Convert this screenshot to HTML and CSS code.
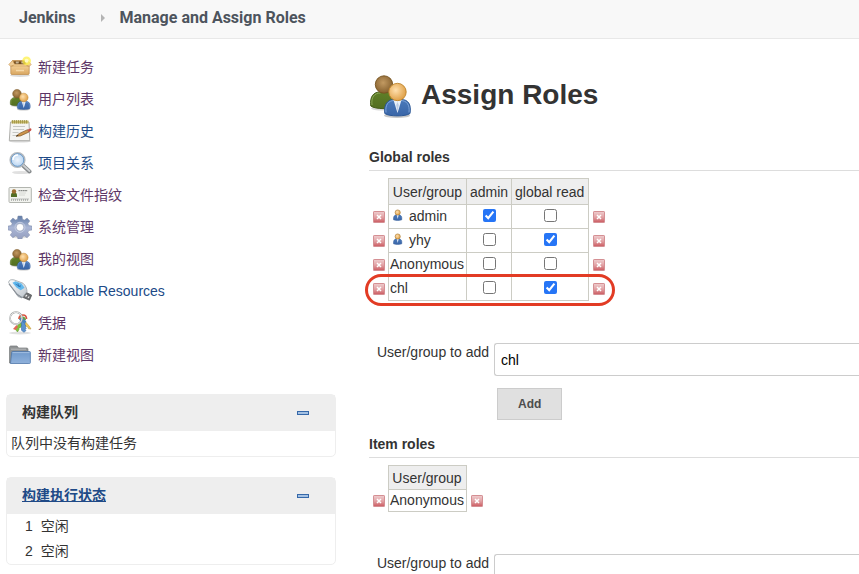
FILE: index.html
```html
<!DOCTYPE html>
<html lang="zh-CN">
<head>
<meta charset="utf-8">
<title>Assign Roles [Jenkins]</title>
<link rel="stylesheet" href="styles.css">
</head>
<body>
<svg class="defs" aria-hidden="true">
  <defs>
    <linearGradient id="g-box" x2="0" y2="1"><stop stop-color="#f3cd92"/><stop offset="1" stop-color="#d8a661"/></linearGradient>
    <radialGradient id="g-brown" cx=".45" cy=".4" r=".6"><stop stop-color="#c29a62"/><stop offset="1" stop-color="#85602e"/></radialGradient>
    <radialGradient id="g-tan" cx=".4" cy=".4" r=".65"><stop stop-color="#ffe0ae"/><stop offset="1" stop-color="#dd9c41"/></radialGradient>
    <linearGradient id="g-green" x2="0" y2="1"><stop stop-color="#5f7f28"/><stop offset="1" stop-color="#536e20"/></linearGradient>
    <linearGradient id="g-blue" x2="0" y2="1"><stop stop-color="#4a79ba"/><stop offset="1" stop-color="#3a66a8"/></linearGradient>
    <radialGradient id="g-lens"><stop stop-color="#eef5fd"/><stop offset="1" stop-color="#b4d2f0"/></radialGradient>
    <linearGradient id="g-gear" x2="0" y2="1"><stop stop-color="#5f7ba6"/><stop offset=".5" stop-color="#a9b5d4"/><stop offset="1" stop-color="#959fc0"/></linearGradient>
    <linearGradient id="g-folder" x2="0" y2="1"><stop stop-color="#7099cb"/><stop offset="1" stop-color="#8fb1db"/></linearGradient>
    <linearGradient id="g-remove" x2="0" y2="1"><stop stop-color="#efcdcf"/><stop offset=".5" stop-color="#e2a3a6"/><stop offset="1" stop-color="#cb5a60"/></linearGradient>
    <linearGradient id="g-metal" x2="1" y2="1"><stop stop-color="#fff"/><stop offset="1" stop-color="#bcc3ca"/></linearGradient>
  </defs>
  <symbol id="i-box" viewBox="0 0 24 24">
    <ellipse cx="12" cy="20.500" rx="10" ry="1.500" fill="#000" opacity=".14"/>
    <path d="M4.500 5.500h15l2 5h-19z" fill="#b07f40" stroke="#c08b45" stroke-width=".7"/>
    <path d="M6 6.500h12l1 2.500H5z" fill="#6f4b1e"/><path d="M8 6.500h3l-.5 2h-3zM13 6.500h2l.5 2h-2z" fill="#c9b594"/>
    <path d="M4.500 5.500L.8 9.500l2 2L7 9.700zM19.500 5.500l3.700 4-2 2L17 9.700z" fill="#f0cd96" stroke="#c8944f" stroke-width=".6"/>
    <path d="M2.800 11.200h18.400v7.200c0 .7-.4 1.100-1.100 1.100H3.900c-.7 0-1.100-.4-1.100-1.100z" fill="url(#g-box)" stroke="#bd8a48" stroke-width=".7"/>
    <path d="M6 9.200h12l1 2.600H5z" fill="#e9c184"/><path d="M8 15.500h8" stroke="#f6d9a8" stroke-width="1.500"/>
    <circle cx="18.600" cy="5.800" r="4.400" fill="#fdf04a" opacity=".75"/><circle cx="18.600" cy="5.800" r="2" fill="#fffbc4"/>
  </symbol>
  <symbol id="i-users" viewBox="0 0 48 48">
    <ellipse cx="17" cy="37.500" rx="12" ry="2" fill="#000" opacity=".15"/>
    <ellipse cx="31" cy="44.500" rx="13" ry="2.500" fill="#000" opacity=".22"/>
    <path d="M4.800 35C3.500 25 8 21 14 21h8c7 0 10 5 9 14-4 3.500-22 3.500-26.200 0z" fill="url(#g-green)" stroke="#445c18"/>
    <path d="M6 34c-1-8 2.500-12 8.500-12" fill="none" stroke="#8fab5a" stroke-width=".9"/>
    <circle cx="18" cy="13.500" r="8.700" fill="url(#g-brown)" stroke="#76531f" stroke-width=".9"/>
    <path d="M18.800 42.500C17.500 33 22 28.500 28 28.500h7c7 0 10.500 4.500 9 14-4 3.200-21 3.200-25.200 0z" fill="url(#g-blue)" stroke="#2b5796"/>
    <path d="M20 41.500c-1-8 2.500-11.800 8-12M43 41.500c1-8-2.500-11.800-8-12" fill="none" stroke="#84a9db" stroke-width=".9"/>
    <path d="M27.500 29h8l-4 13z" fill="#eaf1fa"/><path d="M31.500 31l-1.300 3 1.300 7 1.300-7z" fill="#bccde4"/>
    <circle cx="31.500" cy="21" r="8.700" fill="url(#g-tan)" stroke="#be842c" stroke-width=".9"/>
  </symbol>
  <symbol id="i-user" viewBox="0 0 12 12">
    <path d="M1.500 10.800c-.4-3.600 1.200-5 3.300-5h1.700c2.300 0 3.700 1.400 3.300 5-1.900.9-6.500.9-8.300 0z" fill="url(#g-blue)" stroke="#3a639f" stroke-width=".5"/>
    <path d="M4.700 6h2l-1 4z" fill="#dfe9f6"/><circle cx="5.700" cy="3.500" r="2.600" fill="url(#g-tan)" stroke="#a97a34" stroke-width=".6"/>
  </symbol>
  <symbol id="i-note" viewBox="0 0 24 24">
    <ellipse cx="12" cy="22.300" rx="11" ry="1.200" fill="#000" opacity=".14"/>
    <path d="M2.500 3h18.500l.8 18.700H1.300z" fill="#f4f4f2" stroke="#9a9b97" stroke-width=".8"/>
    <path d="M3.500 1.500h17v3h-17z" fill="#c5b869"/><path d="M4.500 1v3.500M6.500 1v3.500M8.500 1v3.500M10.500 1v3.500M12.500 1v3.500M14.500 1v3.500M16.500 1v3.500M18.500 1v3.500" stroke="#988b3d" stroke-width=".7"/>
    <path d="M5 7.500h12M5 10.500h11M4.500 13.500h6M4.500 16.500h5" stroke="#c6c8c5"/>
    <path d="M8 17.300l3.500-2.900 8-3.700 1.500 2.300-8.500 3.900z" fill="#cd944b" stroke="#7c5628" stroke-width=".7"/><path d="M19.500 10.700l2.500-1.300c1.400-.3 2 1.500.9 2.300L21 13z" fill="#c85248"/>
    <path d="M8 17.300l1.700-1.400.9.900z" fill="#222"/>
  </symbol>
  <symbol id="i-search" viewBox="0 0 24 24">
    <ellipse cx="13" cy="21.500" rx="9" ry="1.600" fill="#000" opacity=".12"/>
    <path d="M15 14.500l6.500 6" stroke="#85898b" stroke-width="4" stroke-linecap="round"/><path d="M15.500 14.500l6 5.500" stroke="#cccfd1" stroke-width="1.800" stroke-linecap="round"/>
    <circle cx="9.500" cy="9" r="7.200" fill="url(#g-lens)" stroke="#b4b9be" stroke-width="1.800"/><circle cx="9.500" cy="9" r="6.300" fill="none" stroke="#6397cb" stroke-width=".9"/>
    <path d="M5 9c0-3 2-5 5-5" fill="none" stroke="#fff" stroke-width="1.500"/>
  </symbol>
  <symbol id="i-card" viewBox="0 0 24 24">
    <rect x="1" y="4.500" width="22.300" height="15" rx="1" fill="#f2f3ef" stroke="#b2b5af"/>
    <path d="M3 14c-.3-4 1-4.500 3-4.500S9.200 10 9 14z" fill="#526d24"/><circle cx="6" cy="8.500" r="2.200" fill="#9b6d30"/>
    <path d="M10.500 7.700h9" stroke="#6b6e6b" stroke-dasharray="1.800 .4"/><path d="M11 10h7M11 12h6" stroke="#d0d2ce" stroke-width=".8"/>
    <path d="M3 17h18" stroke="#a2a5a1" stroke-width="1.600" stroke-dasharray="1 1"/><path d="M3 16h18" stroke="#9b9e9a" stroke-width=".6"/>
  </symbol>
  <symbol id="i-gear" viewBox="0 0 24 24">
    <ellipse cx="12" cy="22" rx="8" ry="1.500" fill="#000" opacity=".12"/>
    <path fill-rule="evenodd" d="M10 1h4l.6 3.300 1.800.8 2.700-2 2.700 2.800-1.900 2.700.8 1.900 3.300.6v3.900l-3.300.6-.8 1.800 1.900 2.700-2.700 2.700-2.700-1.900-1.800.8-.6 2.300h-4l-.6-2.300-1.800-.8-2.700 1.900-2.700-2.700L4.100 17.400l-.8-1.800L0 15v-3.900l3.300-.6.8-1.900-1.900-2.700 2.700-2.800 2.700 2 1.800-.8zM12 8.500a3.800 3.800 0 100 7.600 3.800 3.800 0 000-7.600z" fill="url(#g-gear)" stroke="#8491ad" stroke-width=".5"/>
    <circle cx="12" cy="12.300" r="5" fill="none" stroke="#c4cde2"/>
  </symbol>
  <symbol id="i-usb" viewBox="0 0 24 24">
    <path d="M14 18l4.500-4.500 5.200 2.700-2.200 5z" fill="#6d6f71" stroke="#4f5253" stroke-width=".7"/><path d="M17.500 17.500l1.500-1.500M20 19l1.200-1.500" stroke="#eee" stroke-width="1.200"/>
    <path d="M.6 3.500C.8 1 3 .3 6 .9l9 3.300c2.500 2 4 5.300 4 8.300l-5 6.500-4-1.500z" fill="url(#g-metal)" stroke="#9da4aa" stroke-width=".8"/>
    <path d="M4.500 3.800l3-1.500 6 2.200 3 4.200-3.800 2.500-4.500-3z" fill="#62b9ee"/><path d="M7.500 5l5 3M10 4.300l.5 3 2.500-.5" fill="none" stroke="#2b70ac" stroke-width=".8"/>
    <path d="M1 5l8.300 10.500L14 18.600" fill="none" stroke="#8a9198" stroke-width="1.200"/>
  </symbol>
  <symbol id="i-keys" viewBox="0 0 24 24">
    <ellipse cx="12" cy="22" rx="11" ry="1.500" fill="#000" opacity=".12"/>
    <path d="M16 9l5.500 6.500 1.500 2.500-2.500-.2-.8-2-1.500-.2-3-5z" fill="#efc95d" stroke="#c09b40" stroke-width=".6"/>
    <path d="M11.500 11L7.500 18.500l2 2.500 1.500-2.500-.2-1.300 1.800-.8 2.400-4z" fill="#80c03a" stroke="#5b9130" stroke-width=".5"/>
    <path d="M8.500 14l-3.500 4 2.500 1 2.500-3z" fill="#e36857"/>
    <path d="M12.500 9.500h4.500v4.500l1 1-1 1 1.200 1.200-1 1.300.8 1-2 1.800-2.500-2v-6z" fill="#5a92cf" stroke="#386ba5" stroke-width=".6"/>
    <path d="M11 8c0-3 2-4 4-4s3.500 1.500 3.500 4" fill="none" stroke="#d95440" stroke-width="1.700"/><path d="M11.500 9c0-3 1.800-3.600 3.300-3.600S18 6.600 18 9" fill="#64a04a"/>
    <path d="M12 7.500l5.500 4" stroke="#4881be" stroke-width="3"/>
    <circle cx="8" cy="7.200" r="6" fill="none" stroke="#9da0a0" stroke-width="1.700"/><circle cx="8" cy="7.200" r="6" fill="none" stroke="#f7f7f7" stroke-width=".8"/>
  </symbol>
  <symbol id="i-folder" viewBox="0 0 24 24">
    <path d="M1.500 20V4.500c0-1 .5-1.500 1.500-1.500h6l1.500 2h8c1 0 1.500.5 1.500 1.500V20z" fill="#909394" stroke="#777a7b" stroke-width=".7"/><path d="M3 6.200h15" stroke="#b7babb"/>
    <path d="M4.500 8.500h17c.6 0 .9.300.9.900v10.200c0 .6-.3.900-.9.900h-19L3.700 9.300c0-.5.300-.8.800-.8z" fill="url(#g-folder)" stroke="#4873a9" stroke-width=".7"/><path d="M4.500 9.600h17" stroke="#b4cdea" stroke-width=".7"/>
  </symbol>
  <symbol id="i-remove" viewBox="0 0 12 12">
    <rect x=".5" y=".5" width="11" height="11" rx=".6" fill="url(#g-remove)" stroke="#d48f93"/><path d="M4 4l4 4M8 4L4 8" stroke="#fff" stroke-width="1.500"/>
  </symbol>
  <symbol id="i-minus" viewBox="0 0 12 4"><rect x=".5" y=".5" width="11" height="3" fill="#a4c1e3" stroke="#3568a9"/></symbol>
</svg>

<header class="breadcrumbs">
  <a href="#">Jenkins</a>
  <span class="arrow"></span>
  <a href="#">Manage and Assign Roles</a>
</header>

<div class="page">
  <aside class="side">
    <nav class="tasks">
      <a class="visited" href="#"><svg><use href="#i-box"/></svg>新建任务</a>
      <a class="visited" href="#"><svg><use href="#i-users"/></svg>用户列表</a>
      <a href="#"><svg><use href="#i-note"/></svg>构建历史</a>
      <a href="#"><svg><use href="#i-search"/></svg>项目关系</a>
      <a class="visited" href="#"><svg><use href="#i-card"/></svg>检查文件指纹</a>
      <a class="visited" href="#"><svg><use href="#i-gear"/></svg>系统管理</a>
      <a class="visited" href="#"><svg><use href="#i-users"/></svg>我的视图</a>
      <a href="#"><svg><use href="#i-usb"/></svg>Lockable Resources</a>
      <a class="visited" href="#"><svg><use href="#i-keys"/></svg>凭据</a>
      <a class="visited" href="#"><svg><use href="#i-folder"/></svg>新建视图</a>
    </nav>
    <section class="pane">
      <div class="pane-head"><h2>构建队列</h2><button class="collapse" type="button" aria-label="collapse"><svg><use href="#i-minus"/></svg></button></div>
      <p class="queue">队列中没有构建任务</p>
    </section>
    <section class="pane">
      <div class="pane-head"><h2><a href="#">构建执行状态</a></h2><button class="collapse" type="button" aria-label="collapse"><svg><use href="#i-minus"/></svg></button></div>
      <ol class="executors"><li><span>1</span>空闲</li><li><span>2</span>空闲</li></ol>
    </section>
  </aside>

  <main class="main">
    <h1><svg><use href="#i-users"/></svg>Assign Roles</h1>

    <h2 class="section">Global roles</h2>
    <table class="roles">
      <thead><tr><td class="tool"></td><th>User/group</th><th>admin</th><th>global read</th><td class="tool"></td></tr></thead>
      <tbody>
        <tr><td class="tool"><button type="button" aria-label="remove"><svg><use href="#i-remove"/></svg></button></td><td class="name"><svg><use href="#i-user"/></svg>admin</td><td><input type="checkbox" aria-label="admin" checked></td><td><input type="checkbox" aria-label="global read"></td><td class="tool"><button type="button" aria-label="remove"><svg><use href="#i-remove"/></svg></button></td></tr>
        <tr><td class="tool"><button type="button" aria-label="remove"><svg><use href="#i-remove"/></svg></button></td><td class="name"><svg><use href="#i-user"/></svg>yhy</td><td><input type="checkbox" aria-label="admin"></td><td><input type="checkbox" aria-label="global read" checked></td><td class="tool"><button type="button" aria-label="remove"><svg><use href="#i-remove"/></svg></button></td></tr>
        <tr><td class="tool"><button type="button" aria-label="remove"><svg><use href="#i-remove"/></svg></button></td><td class="name">Anonymous</td><td><input type="checkbox" aria-label="admin"></td><td><input type="checkbox" aria-label="global read"></td><td class="tool"><button type="button" aria-label="remove"><svg><use href="#i-remove"/></svg></button></td></tr>
        <tr class="marked"><td class="tool"><button type="button" aria-label="remove"><svg><use href="#i-remove"/></svg></button></td><td class="name">chl</td><td><input type="checkbox" aria-label="admin"></td><td><input type="checkbox" aria-label="global read" checked></td><td class="tool"><button type="button" aria-label="remove"><svg><use href="#i-remove"/></svg></button></td></tr>
      </tbody>
    </table>
    <form class="add">
      <label for="global-add">User/group to add</label>
      <input id="global-add" type="text" value="chl">
      <button type="button">Add</button>
    </form>

    <h2 class="section">Item roles</h2>
    <table class="roles compact">
      <thead><tr><td class="tool"></td><th>User/group</th><td class="tool"></td></tr></thead>
      <tbody><tr><td class="tool"><button type="button" aria-label="remove"><svg><use href="#i-remove"/></svg></button></td><td class="name">Anonymous</td><td class="tool"><button type="button" aria-label="remove"><svg><use href="#i-remove"/></svg></button></td></tr></tbody>
    </table>
    <form class="add">
      <label for="item-add">User/group to add</label>
      <input id="item-add" type="text">
    </form>
  </main>
</div>
</body>
</html>
```
FILE: styles.css
```css
* { box-sizing: border-box; }

body {
  height: 100vh;
  margin: 0;
  overflow: hidden;
  background: #fff;
  color: #333;
  font: 14px/20px "Liberation Sans", "Noto Sans CJK SC", sans-serif;
}

h1, h2, p, ol { margin: 0; padding: 0; }
a { color: #204a87; text-decoration: none; }
svg { display: block; flex: none; }
.defs { position: absolute; width: 0; height: 0; }

.breadcrumbs {
  display: flex;
  align-items: center;
  padding: 8px 19px 10px;
  border-bottom: 1px solid #e8e8e8;
  background: #f8f8f8;
  font: bold 16px/20px Roboto, sans-serif;
}
.breadcrumbs a { color: #4d545d; }
.arrow {
  margin: 0 15px 0 25px;
  border: 4px solid transparent;
  border-right: 0;
  border-left-color: #b4b4b4;
}

.page { display: flex; }
.side { flex: none; width: 336px; padding: 12px 0 0 6px; }
.tasks { margin-bottom: 23px; }
.tasks a {
  display: flex;
  align-items: center;
  gap: 6px;
  height: 32px;
  padding-left: 2px;
}
.tasks .visited { color: #5c3566; }
.tasks svg { width: 24px; height: 24px; }

.pane {
  margin-bottom: 20px;
  border: 1px solid #eee;
  border-radius: 5px;
}
.pane-head {
  display: flex;
  align-items: center;
  justify-content: space-between;
  height: 36px;
  padding: 0 26px 0 15px;
  background: #eee;
}
.pane-head h2 { padding-bottom: 2px; font-size: 14px; font-weight: bold; }
.pane-head a { text-decoration: underline; }
.collapse, .tool button { padding: 0; border: 0; background: none; }
.collapse svg { width: 12px; height: 4px; }
.queue { padding: 2px 4px 3px; }
.executors { list-style: none; }
.executors li { display: flex; gap: 8px; height: 25px; padding: 2px 18px; }

.main { flex: 1; min-width: 0; padding: 32px 0 0 33px; }
h1 {
  display: flex;
  align-items: center;
  gap: 7px;
  margin: 0 0 28px -3px;
  font-size: 28px;
  line-height: 48px;
}
h1 svg { width: 48px; height: 48px; }

.section {
  margin-bottom: 7px;
  padding-bottom: 3px;
  border-bottom: 1px solid #ddd;
  font-size: 14px;
}

.roles { border-collapse: collapse; }
.roles th, .roles td {
  height: 24px;
  padding: 0 1px 2px;
  border: 1px solid #ccccc4;
  text-align: center;
}
.roles th {
  height: 26px;
  padding: 0 3px;
  background: #eee;
  font-weight: normal;
}
.roles th:last-of-type { padding-right: 4px; }
.roles .tool { width: 19px; padding: 0 3px 0 4px; border: 0; }
.tool button, .tool svg { display: block; width: 12px; height: 12px; }
.roles .name { padding-right: 2px; text-align: left; line-height: 18px; }
.name svg { display: inline-block; width: 12px; height: 12px; margin: 0 5px 0 2px; }
.roles input { display: block; width: 13px; height: 13px; margin: 0 auto; accent-color: #2675f6; }
.compact th { height: 24px; padding-right: 3px; }
.compact td { height: 22px; }

.marked { position: relative; }
.marked::after {
  content: "";
  position: absolute;
  inset: -3px -7px -5px -4px;
  border: 3px solid #e23b24;
  border-radius: 16px;
  pointer-events: none;
}

.add {
  display: grid;
  grid-template-columns: 120px 1fr;
  column-gap: 5px;
  row-gap: 12px;
  margin: 42px 0 14px;
}
.add label { line-height: 18px; text-align: right; }
.add input {
  width: 100%;
  height: 33px;
  padding: 0 6px;
  border: 1px solid #ccc;
  border-right: 0;
  border-radius: 3px 0 0 3px;
  background: #fff;
  color: #000;
  font: inherit;
}
.add button {
  grid-column: 2;
  justify-self: start;
  height: 32px;
  margin-left: 3px;
  padding: 0 20px;
  border: 1px solid #ccc;
  background: #e0e0e0;
  color: #4d4d4d;
  font: bold 12px/20px "Liberation Sans", sans-serif;
}
```
